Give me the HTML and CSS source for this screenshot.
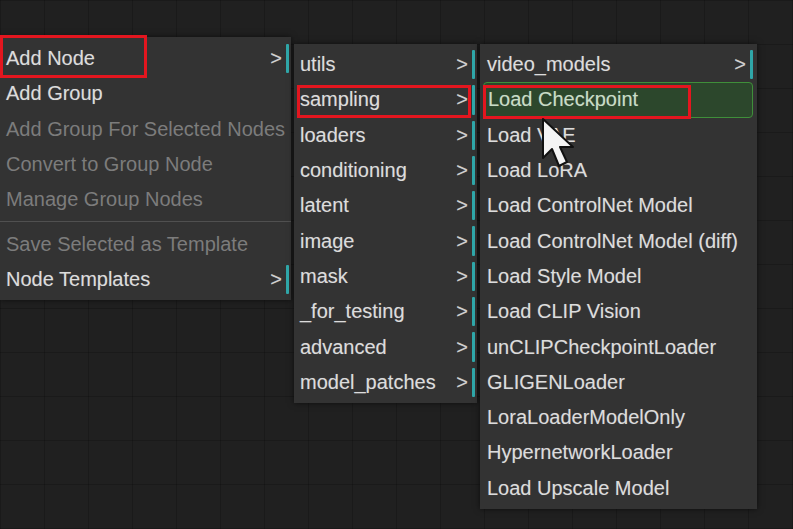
FILE: index.html
```html
<!DOCTYPE html>
<html>
<head>
<meta charset="utf-8">
<link rel="stylesheet" href="styles.css">
</head>
<body>
<div class="canvas">
  <div class="menu menu-main">
    <div class="row sub"><span>Add Node</span><span class="arrow">&gt;</span></div>
    <div class="row"><span>Add Group</span></div>
    <div class="row disabled"><span>Add Group For Selected Nodes</span></div>
    <div class="row disabled"><span>Convert to Group Node</span></div>
    <div class="row disabled"><span>Manage Group Nodes</span></div>
    <div class="sep"></div>
    <div class="row disabled"><span>Save Selected as Template</span></div>
    <div class="row sub"><span>Node Templates</span><span class="arrow">&gt;</span></div>
  </div>
  <div class="menu menu-cat">
    <div class="row sub"><span>utils</span><span class="arrow">&gt;</span></div>
    <div class="row sub"><span>sampling</span><span class="arrow">&gt;</span></div>
    <div class="row sub"><span>loaders</span><span class="arrow">&gt;</span></div>
    <div class="row sub"><span>conditioning</span><span class="arrow">&gt;</span></div>
    <div class="row sub"><span>latent</span><span class="arrow">&gt;</span></div>
    <div class="row sub"><span>image</span><span class="arrow">&gt;</span></div>
    <div class="row sub"><span>mask</span><span class="arrow">&gt;</span></div>
    <div class="row sub"><span>_for_testing</span><span class="arrow">&gt;</span></div>
    <div class="row sub"><span>advanced</span><span class="arrow">&gt;</span></div>
    <div class="row sub"><span>model_patches</span><span class="arrow">&gt;</span></div>
  </div>
  <div class="menu menu-load">
    <div class="row sub"><span>video_models</span><span class="arrow">&gt;</span></div>
    <div class="row hover"><span>Load Checkpoint</span></div>
    <div class="row"><span>Load VAE</span></div>
    <div class="row"><span>Load LoRA</span></div>
    <div class="row"><span>Load ControlNet Model</span></div>
    <div class="row"><span>Load ControlNet Model (diff)</span></div>
    <div class="row"><span>Load Style Model</span></div>
    <div class="row"><span>Load CLIP Vision</span></div>
    <div class="row"><span>unCLIPCheckpointLoader</span></div>
    <div class="row"><span>GLIGENLoader</span></div>
    <div class="row"><span>LoraLoaderModelOnly</span></div>
    <div class="row"><span>HypernetworkLoader</span></div>
    <div class="row"><span>Load Upscale Model</span></div>
  </div>

  <div class="mark mark-node"></div>
  <div class="mark mark-sampling"></div>
  <div class="mark mark-ckpt"></div>

  <svg class="cursor" width="40" height="54" viewBox="0 0 40 54">
    <path d="M3 2 L3 41 L12 32 L19 49 L27 45 L20 30 L33 30 Z" fill="#f4f4f4" stroke="#111" stroke-width="2" stroke-linejoin="round"/>
  </svg>
</div>
</body>
</html>
```

FILE: styles.css
```css
html, body {
  margin: 0;
  padding: 0;
  background: #1f1f1f;
}

.canvas {
  position: relative;
  width: 793px;
  height: 529px;
  overflow: hidden;
  display: flex;
  align-items: flex-start;
  padding-top: 37px;
  box-sizing: border-box;
  background-color: #202020;
  background-image:
    linear-gradient(to right, rgba(0,0,0,0.18) 1px, transparent 1px),
    linear-gradient(to bottom, rgba(0,0,0,0.18) 1px, transparent 1px);
  background-size: 44px 44px;
  font-family: "Liberation Sans", Arial, sans-serif;
  font-size: 20px;
}

.menu {
  background: #333333;
  box-shadow: 0 0 6px rgba(0,0,0,0.6);
  padding: 3px 0 3px 0;
  box-sizing: border-box;
}

.menu-main {
  width: 291px;
  padding-top: 4px;
}

.menu-cat {
  width: 183px;
  margin-left: 3px;
  margin-top: 7px;
}

.menu-load {
  width: 277px;
  margin-left: 3px;
  margin-top: 7px;
}

.row {
  height: 35.3px;
  display: flex;
  align-items: center;
  justify-content: space-between;
  padding-left: 6px;
  padding-right: 3px;
  color: #dcdcdc;
  white-space: nowrap;
  box-sizing: border-box;
  position: relative;
  text-shadow: 0 0 1px rgba(200,200,200,0.35);
}

.menu-load .row {
  padding-left: 7px;
}

.row.disabled {
  color: #7c7c7c;
  text-shadow: none;
}

.row.sub {
  padding-right: 4px;
}

.row.sub::after {
  content: "";
  position: absolute;
  right: 2px;
  top: 3px;
  bottom: 3px;
  width: 3px;
  background: #2fa6a8;
  border-radius: 1px;
}

.menu-load .row.sub::after {
  right: 4px;
}

.arrow {
  color: #d0d0d0;
  margin-right: 5px;
}

.menu-load .arrow {
  margin-right: 7px;
}

.sep {
  height: 1px;
  background: #505050;
  margin: 4px 0 4px 0;
}

.menu-load .row.hover {
  margin: 0 4px 0 3px;
  padding-left: 4px;
  background: #2c472c;
  border: 1px solid #3f8f3a;
  border-radius: 4px;
  color: #c8dcc6;
}

.mark {
  position: absolute;
  border: 3px solid #e3161f;
  box-sizing: border-box;
}

.mark-node {
  left: 0;
  top: 35px;
  width: 147px;
  height: 43px;
}

.mark-sampling {
  left: 297px;
  top: 85px;
  width: 174px;
  height: 33px;
}

.mark-ckpt {
  left: 483px;
  top: 85px;
  width: 208px;
  height: 34px;
}

.cursor {
  position: absolute;
  left: 540px;
  top: 117px;
}
```
